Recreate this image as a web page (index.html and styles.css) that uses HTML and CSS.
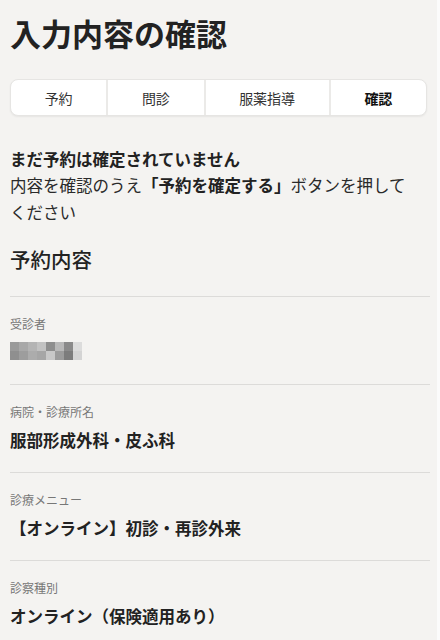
FILE: index.html
```html
<!DOCTYPE html>
<html lang="ja">
  <head>
    <meta charset="utf-8">
    <title>入力内容の確認</title>
    <link rel="stylesheet" href="styles.css">
  </head>
  <body>
    <div class="page">
      <h1 class="title">入力内容の確認</h1>

      <nav class="steps">
        <div class="step">予約</div>
        <div class="step">問診</div>
        <div class="step">服薬指導</div>
        <div class="step current">確認</div>
      </nav>

      <div class="notice">
        <p class="notice-title">まだ予約は確定されていません</p>
        <p>内容を確認のうえ<strong>「予約を確定する」</strong>ボタンを押してください</p>
      </div>

      <h2 class="section-title">予約内容</h2>

      <dl class="details">
        <div class="item">
          <dt>受診者</dt>
          <dd>
            <span class="mosaic">
              <i></i><i></i><i></i><i></i><i></i><i></i><i></i><i></i>
              <i></i><i></i><i></i><i></i><i></i><i></i><i></i><i></i>
            </span>
          </dd>
        </div>
        <div class="item">
          <dt>病院・診療所名</dt>
          <dd>服部形成外科・皮ふ科</dd>
        </div>
        <div class="item">
          <dt>診療メニュー</dt>
          <dd>【オンライン】初診・再診外来</dd>
        </div>
        <div class="item">
          <dt>診察種別</dt>
          <dd>オンライン（保険適用あり）</dd>
        </div>
      </dl>
    </div>
  </body>
</html>
```

FILE: styles.css
```css
body {
  margin: 0;
  background: #fbfbfb;
  font-family: "Noto Sans CJK JP", "Noto Sans", sans-serif;
  color: #222;
}

.page {
  width: 437px;
  min-height: 640px;
  box-sizing: border-box;
  padding: 11px 10px 0 10px;
  background: #f4f3f1;
}

.title {
  margin: 0;
  font-size: 31px;
  line-height: 43px;
  font-weight: 700;
  color: #222;
}

/* step tabs */
.steps {
  display: flex;
  margin-top: 25px;
  width: 417px;
  height: 37px;
  background: #fff;
  border: 1px solid #e6e5e3;
  border-radius: 8px;
  box-shadow: 0 1px 2px rgba(0, 0, 0, 0.06);
  box-sizing: border-box;
  overflow: hidden;
}

.step {
  flex: 1 1 auto;
  display: flex;
  align-items: center;
  justify-content: center;
  font-size: 14px;
  color: #333;
  border-left: 2px solid #ebeae8;
}

.step:first-child {
  border-left: none;
}

.step.current {
  font-weight: 700;
  color: #111;
}

/* notice */
.notice {
  margin-top: 30px;
  padding-right: 10px;
  font-size: 16.5px;
  line-height: 26.4px;
  color: #2a2a2a;
}

.notice p {
  margin: 0;
}

.notice-title {
  font-weight: 700;
  color: #222;
}

.notice strong {
  font-weight: 700;
  color: #222;
}

.section-title {
  margin: 19px 0 22px 0;
  font-size: 20.5px;
  line-height: 30px;
  font-weight: 500;
  color: #222;
}

/* details list */
.details {
  margin: 0;
  width: 420px;
}

.item {
  border-top: 1px solid #dcdbd9;
  padding: 18px 0 19px 0;
}

.item dt {
  font-size: 12px;
  line-height: 18px;
  color: #777;
}

.item dd {
  margin: 6px 0 0 0;
  font-size: 16.5px;
  line-height: 26px;
  font-weight: 700;
  color: #222;
}

.mosaic {
  display: grid;
  grid-template-columns: repeat(8, 9px);
  grid-auto-rows: 9px;
  width: 72px;
  padding: 3px 0 5px 0;
}

.mosaic i:nth-child(1) { background: #9a9a9a; }
.mosaic i:nth-child(2) { background: #a8a8a8; }
.mosaic i:nth-child(3) { background: #b4b4b4; }
.mosaic i:nth-child(4) { background: #c2c2c2; }
.mosaic i:nth-child(5) { background: #8e8e8e; }
.mosaic i:nth-child(6) { background: #b8b8b8; }
.mosaic i:nth-child(7) { background: #8a8a8a; }
.mosaic i:nth-child(8) { background: #dcdcdc; }
.mosaic i:nth-child(9) { background: #8f8f8f; }
.mosaic i:nth-child(10) { background: #9d9d9d; }
.mosaic i:nth-child(11) { background: #acacac; }
.mosaic i:nth-child(12) { background: #a6a6a6; }
.mosaic i:nth-child(13) { background: #c8c8c8; }
.mosaic i:nth-child(14) { background: #9c9c9c; }
.mosaic i:nth-child(15) { background: #7c7c7c; }
.mosaic i:nth-child(16) { background: #d4d4d4; }
```
